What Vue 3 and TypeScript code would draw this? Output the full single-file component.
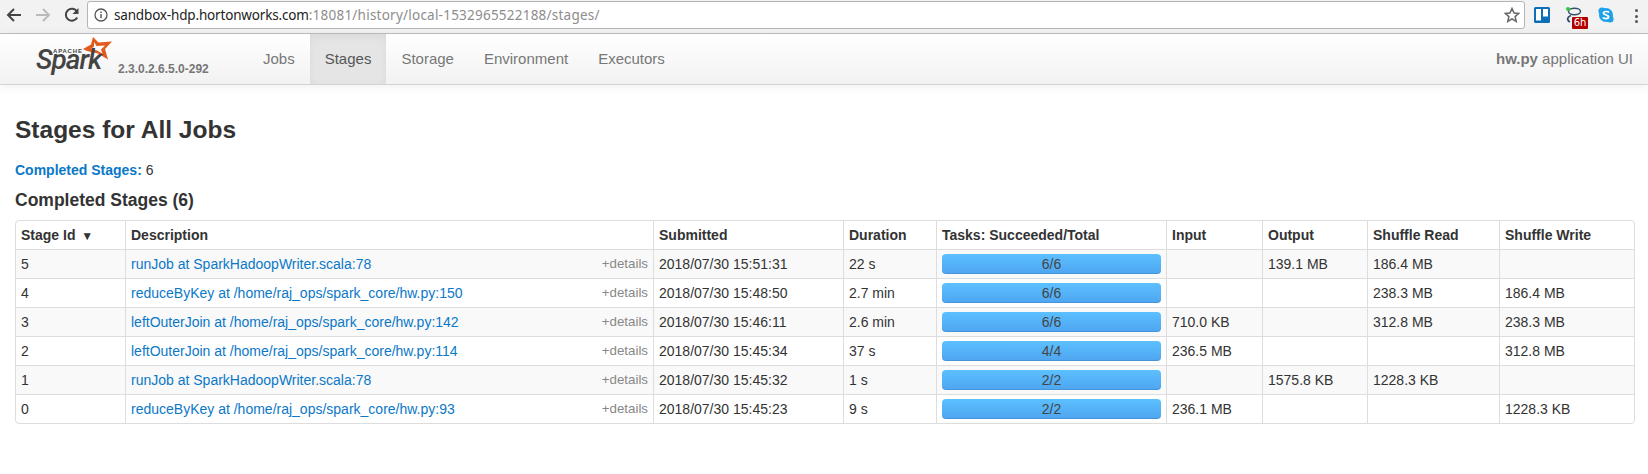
<script setup lang="ts">
type Stage = {
  id: number
  desc: string
  submitted: string
  duration: string
  tasks: string
  input: string
  output: string
  read: string
  write: string
}

const navItems = ['Jobs', 'Stages', 'Storage', 'Environment', 'Executors']

const columns = ['Description', 'Submitted', 'Duration', 'Tasks: Succeeded/Total', 'Input', 'Output', 'Shuffle Read', 'Shuffle Write']

const stages: Stage[] = [
  { id: 5, desc: 'runJob at SparkHadoopWriter.scala:78', submitted: '2018/07/30 15:51:31', duration: '22 s', tasks: '6/6', input: '', output: '139.1 MB', read: '186.4 MB', write: '' },
  { id: 4, desc: 'reduceByKey at /home/raj_ops/spark_core/hw.py:150', submitted: '2018/07/30 15:48:50', duration: '2.7 min', tasks: '6/6', input: '', output: '', read: '238.3 MB', write: '186.4 MB' },
  { id: 3, desc: 'leftOuterJoin at /home/raj_ops/spark_core/hw.py:142', submitted: '2018/07/30 15:46:11', duration: '2.6 min', tasks: '6/6', input: '710.0 KB', output: '', read: '312.8 MB', write: '238.3 MB' },
  { id: 2, desc: 'leftOuterJoin at /home/raj_ops/spark_core/hw.py:114', submitted: '2018/07/30 15:45:34', duration: '37 s', tasks: '4/4', input: '236.5 MB', output: '', read: '', write: '312.8 MB' },
  { id: 1, desc: 'runJob at SparkHadoopWriter.scala:78', submitted: '2018/07/30 15:45:32', duration: '1 s', tasks: '2/2', input: '', output: '1575.8 KB', read: '1228.3 KB', write: '' },
  { id: 0, desc: 'reduceByKey at /home/raj_ops/spark_core/hw.py:93', submitted: '2018/07/30 15:45:23', duration: '9 s', tasks: '2/2', input: '236.1 MB', output: '', read: '', write: '1228.3 KB' },
]
</script>

<template>
  <div class="page">
    <div class="browser">
      <div class="browser-btns">
        <svg width="16" height="16" viewBox="0 0 16 16"><path d="M15 8H2.5M8 2 2 8l6 6" fill="none" stroke="#444" stroke-width="2" /></svg>
        <svg width="16" height="16" viewBox="0 0 16 16"><path d="M1 8h12.5M8 2l6 6-6 6" fill="none" stroke="#bbb" stroke-width="2" /></svg>
        <svg width="16" height="16" viewBox="0 0 16 16"><path d="M13.2 10.5A6 6 0 1 1 13 4.6" fill="none" stroke="#444" stroke-width="2" /><path d="M14.5 1v6h-6z" fill="#444" /></svg>
      </div>
      <div class="omnibox">
        <svg width="14" height="14" viewBox="0 0 14 14" class="info"><circle cx="7" cy="7" r="6" fill="none" stroke="#555" stroke-width="1.3" /><path d="M7 6v4.2M7 3.6v1.4" stroke="#555" stroke-width="1.4" /></svg>
        <span class="url"><span class="host">sandbox-hdp.hortonworks.com</span>:18081/history/local-1532965522188/stages/</span>
        <svg width="16" height="16" viewBox="0 0 16 16"><path d="m8 1.5 2 4.5 4.8.4-3.7 3.2 1.1 4.8L8 11.9l-4.2 2.5 1.1-4.8L1.2 6.4 6 6z" fill="none" stroke="#666" stroke-width="1.5" /></svg>
      </div>
      <div class="extensions">
        <svg width="16" height="16" viewBox="0 0 16 16"><rect width="16" height="16" rx="1.5" fill="#0c6fb8" /><rect x="2" y="2" width="5" height="11.5" fill="#fff" /><rect x="9" y="2" width="5" height="7.5" fill="#fff" /></svg>
        <div class="ext-clock">
          <svg width="18" height="16" viewBox="0 0 18 16"><ellipse cx="8.5" cy="4.5" rx="6" ry="3.2" fill="none" stroke="#35506b" stroke-width="1.5" /><path d="M5 8.5C1 10 0.5 13 4 15" fill="none" stroke="#35506b" stroke-width="1.8" /><circle cx="2" cy="2" r="2" fill="#2ecc40" /></svg>
          <span class="ext-badge">6h</span>
        </div>
        <svg width="16" height="16" viewBox="0 0 16 16" class="ext-skype"><circle cx="8" cy="8" r="7" fill="#1da1e8" /><circle cx="4" cy="4" r="3.6" fill="#1da1e8" /><circle cx="12" cy="12" r="3.6" fill="#1da1e8" /><path d="M11 5.4C10 4.2 5.6 4 5.4 6c-.2 2.2 5.4 1.6 5.2 4.2-.2 2-4.8 1.8-5.8.4" fill="none" stroke="#fff" stroke-width="1.7" /></svg>
        <div class="dots"><i></i><i></i><i></i></div>
      </div>
    </div>

    <nav class="navbar">
      <div class="brand">
        <div class="logo">
          <svg width="29" height="23" viewBox="0 0 29 23" class="logo-star"><path fill-rule="evenodd" d="M10 0 15.5 5.5 29 4.5 22 12 25 22.5 15 16.5 4 14 0 12 8 7.5ZM11 5 11 9.5 8 12 14 13.5 19.5 16.5 18 12.5 22 8.5 13.5 9Z" fill="#e25a1c" /></svg>
          <span class="logo-apache">APACHE</span>
          <span class="logo-spark">Spark</span>
        </div>
        <span class="version">2.3.0.2.6.5.0-292</span>
      </div>
      <ul class="nav">
        <li v-for="item in navItems" :key="item" :class="{ active: item === 'Stages' }">{{ item }}</li>
      </ul>
      <p class="app-name"><strong>hw.py</strong> application UI</p>
    </nav>

    <main class="content">
      <h3>Stages for All Jobs</h3>
      <p class="summary"><a>Completed Stages:</a> 6</p>
      <h4>Completed Stages (6)</h4>
      <div class="table-wrap">
        <table>
          <thead>
            <tr>
              <th>Stage Id <span class="sort">▼</span></th>
              <th v-for="col in columns" :key="col">{{ col }}</th>
            </tr>
          </thead>
          <tbody>
            <tr v-for="s in stages" :key="s.id">
              <td>{{ s.id }}</td>
              <td>
                <div class="desc">
                  <a>{{ s.desc }}</a>
                  <span class="details">+details</span>
                </div>
              </td>
              <td>{{ s.submitted }}</td>
              <td>{{ s.duration }}</td>
              <td><div class="progress">{{ s.tasks }}</div></td>
              <td>{{ s.input }}</td>
              <td>{{ s.output }}</td>
              <td>{{ s.read }}</td>
              <td>{{ s.write }}</td>
            </tr>
          </tbody>
        </table>
      </div>
    </main>
  </div>
</template>

<style>
html, body {
  margin: 0;
  background: #fff;
}
</style>

<style scoped>
.page {
  width: 1648px;
  height: 474px;
  overflow: hidden;
  font-family: "Liberation Sans", Arial, sans-serif;
  font-size: 14px;
  line-height: 20px;
  color: #333;
}

.browser {
  height: 34px;
  box-sizing: border-box;
  display: flex;
  align-items: flex-start;
  background: #f2f2f2;
  border-bottom: 1px solid #c0c0c0;
}

.browser-btns {
  display: flex;
  gap: 13px;
  width: 87px;
  padding: 7px 0 0 6px;
  box-sizing: border-box;
}

.omnibox {
  width: 1438px;
  height: 28px;
  margin-top: 1px;
  box-sizing: border-box;
  display: flex;
  align-items: center;
  background: #fff;
  border: 1px solid #b5b5b5;
  border-radius: 3px;
  padding: 0 4px 0 6px;
}

.info {
  margin-right: 6px;
}

.url {
  flex: 1;
  font-family: "Noto Sans", sans-serif;
  font-size: 13.5px;
  letter-spacing: 0.23px;
  color: #8d8d8d;
}

.host {
  color: #222;
  letter-spacing: -0.17px;
}

.extensions {
  display: flex;
  align-items: flex-start;
  padding: 7px 0 0 9px;
}

.ext-clock {
  position: relative;
  margin-left: 16px;
  width: 22px;
}

.ext-badge {
  position: absolute;
  left: 6px;
  top: 10px;
  width: 16px;
  height: 12px;
  background: #b30000;
  color: #fff;
  font-size: 10px;
  line-height: 12px;
  text-align: center;
  border-radius: 1px;
  font-family: "DejaVu Sans", sans-serif;
}

.ext-skype {
  margin-left: 10px;
}

.dots {
  margin-left: 21px;
  padding-top: 2px;
  display: flex;
  flex-direction: column;
  gap: 2.5px;
}

.dots i {
  width: 3px;
  height: 3px;
  background: #555;
  border-radius: 50%;
}

.navbar {
  height: 51px;
  box-sizing: border-box;
  display: flex;
  align-items: stretch;
  background: linear-gradient(to bottom, #ffffff, #f2f2f2);
  border-bottom: 1px solid #d4d4d4;
  box-shadow: 0 1px 10px rgba(0, 0, 0, 0.07);
}

.brand {
  width: 248px;
  position: relative;
  flex: none;
}

.logo {
  position: absolute;
  left: 35px;
  top: 2px;
  width: 78px;
  height: 44px;
}

.logo-star {
  position: absolute;
  left: 48px;
  top: 1px;
}

.logo-apache {
  position: absolute;
  left: 18px;
  top: 12px;
  font-size: 6px;
  line-height: 6px;
  font-weight: 700;
  letter-spacing: 0.8px;
  color: #444;
}

.logo-spark {
  position: absolute;
  left: 1px;
  top: 19px;
  font-family: Roboto, sans-serif;
  font-size: 28px;
  line-height: 10px;
  font-weight: 500;
  font-style: italic;
  letter-spacing: -1px;
  color: #444;
}

.version {
  position: absolute;
  left: 118px;
  top: 25px;
  font-size: 12px;
  font-weight: 700;
  color: #777;
}

.nav {
  display: flex;
  list-style: none;
  margin: 0;
  padding: 0;
}

.nav li {
  padding: 15px 15px;
  font-size: 15px;
  color: #777;
}

.nav li.active {
  background: #e5e5e5;
  color: #555;
  box-shadow: inset 0 3px 8px rgba(0, 0, 0, 0.05);
}

.app-name {
  margin: 0 15px 0 auto;
  padding-top: 15px;
  font-size: 15px;
  color: #777;
}

.content {
  padding: 0 10px 0 15px;
}

h3 {
  margin: 0;
  padding-top: 30px;
  font-size: 24.5px;
  line-height: 30px;
  font-weight: 700;
}

.summary {
  margin: 0;
  padding-top: 15px;
}

.summary a {
  font-weight: 700;
  color: #0b78c8;
}

h4 {
  margin: 0;
  padding-top: 10px;
  font-size: 17.5px;
  line-height: 20px;
  font-weight: 700;
}

.table-wrap {
  margin-top: 10px;
  border: 1px solid #ddd;
  border-radius: 4px;
  overflow: hidden;
  width: 1620px;
  box-sizing: border-box;
}

table {
  width: 100%;
  table-layout: fixed;
  border-collapse: separate;
  border-spacing: 0;
}

th, td {
  height: 29px;
  box-sizing: border-box;
  padding: 4px 5px;
  text-align: left;
  border-left: 1px solid #ddd;
  border-top: 1px solid #ddd;
  white-space: nowrap;
}

thead th {
  border-top: 0;
  height: 28px;
}

th:first-child, td:first-child {
  border-left: 0;
}

th:nth-child(1) { width: 109px; }
th:nth-child(2) { width: 528px; }
th:nth-child(3) { width: 190px; }
th:nth-child(4) { width: 93px; }
th:nth-child(5) { width: 230px; }
th:nth-child(6) { width: 96px; }
th:nth-child(7) { width: 105px; }
th:nth-child(8) { width: 132px; }

.sort {
  font-size: 12px;
  line-height: 1;
  margin-left: 2px;
}

tbody tr:nth-child(odd) td {
  background: #f9f9f9;
}

td a {
  color: #0b78c8;
}

.desc {
  display: flex;
  justify-content: space-between;
}

.details {
  font-size: 13.3px;
  color: #888;
}

.progress {
  height: 20px;
  box-sizing: border-box;
  border-radius: 4px;
  background: linear-gradient(to bottom, #5cc0ff, #4ea5f0);
  box-shadow: inset 0 -1px 0 rgba(0, 0, 0, 0.1);
  text-align: center;
  color: #444;
}
</style>
